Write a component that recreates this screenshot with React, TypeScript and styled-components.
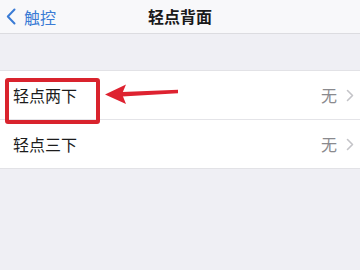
import React from "react";
import styled, { createGlobalStyle } from "styled-components";

const Global = createGlobalStyle`
  html, body { margin: 0; padding: 0; background: #efeff4; }
  body { font-family: "Noto Sans CJK SC", "Noto Sans", sans-serif; }
`;

const Page = styled.div`
  width: 360px;
  height: 270px;
  background: #efeff4;
  position: relative;
  overflow: hidden;
`;

const NavBar = styled.div`
  height: 33px;
  background: #f8f8fa;
  border-bottom: 1px solid #dcdce0;
  display: grid;
  grid-template-columns: 1fr auto 1fr;
  align-items: center;
`;

const Back = styled.div`
  display: flex;
  align-items: center;
  gap: 8px;
  padding-left: 6px;
  color: #3a7bd5;
  font-size: 16px;
`;

const Title = styled.div`
  font-size: 16px;
  font-weight: 700;
  color: #1a1a1a;
  margin-top: -1px;
`;

const Spacer = styled.div`
  height: 36px;
`;

const Group = styled.div`
  background: #ffffff;
  border-top: 1px solid #e2e2e6;
  border-bottom: 1px solid #e2e2e6;
`;

const Row = styled.div<{ $last?: boolean }>`
  height: 48px;
  display: flex;
  align-items: center;
  justify-content: space-between;
  padding: 0 6px 0 13px;
  border-bottom: ${(p) => (p.$last ? "none" : "1px solid #e4e4e8")};
  position: relative;
`;

const Label = styled.div`
  font-size: 16px;
  color: #1c1c1c;
  font-weight: 400;
`;

const Detail = styled.div`
  display: flex;
  align-items: center;
  gap: 9px;
  color: #8a8a8e;
  font-size: 16px;
`;

const Highlight = styled.div`
  position: absolute;
  left: 5px;
  top: 7px;
  width: 87px;
  height: 38px;
  border: 4px solid #d9232d;
  border-radius: 3px;
`;

const Arrow = styled.svg`
  position: absolute;
  left: 104px;
  top: 82px;
`;

const Chevron = () => (
  <svg width="8" height="13" viewBox="0 0 8 13">
    <path d="M1.5 1.5 L6.5 6.5 L1.5 11.5" fill="none" stroke="#c4c4c8" strokeWidth="1.6" strokeLinecap="round" strokeLinejoin="round" />
  </svg>
);

export default function App() {
  return (
    <Page>
      <Global />
      <NavBar>
        <Back>
          <svg width="10" height="17" viewBox="0 0 10 17">
            <path d="M8.5 1.5 L1.8 8.5 L8.5 15.5" fill="none" stroke="#3a7bd5" strokeWidth="2" strokeLinecap="round" strokeLinejoin="round" />
          </svg>
          <span>触控</span>
        </Back>
        <Title>轻点背面</Title>
        <div />
      </NavBar>
      <Spacer />
      <Group>
        <Row>
          <Label>轻点两下</Label>
          <Detail>
            <span>无</span>
            <Chevron />
          </Detail>
          <Highlight />
        </Row>
        <Row $last>
          <Label>轻点三下</Label>
          <Detail>
            <span>无</span>
            <Chevron />
          </Detail>
        </Row>
      </Group>
      <Arrow width="78" height="24" viewBox="0 0 78 24">
        <path d="M18 10 L74 7.8 L74 11.2 L18 14.4 Z" fill="#de2230" />
        <path d="M1 12.5 L22 2.5 L18 12 L22 22 Z" fill="#de2230" />
      </Arrow>
    </Page>
  );
}
